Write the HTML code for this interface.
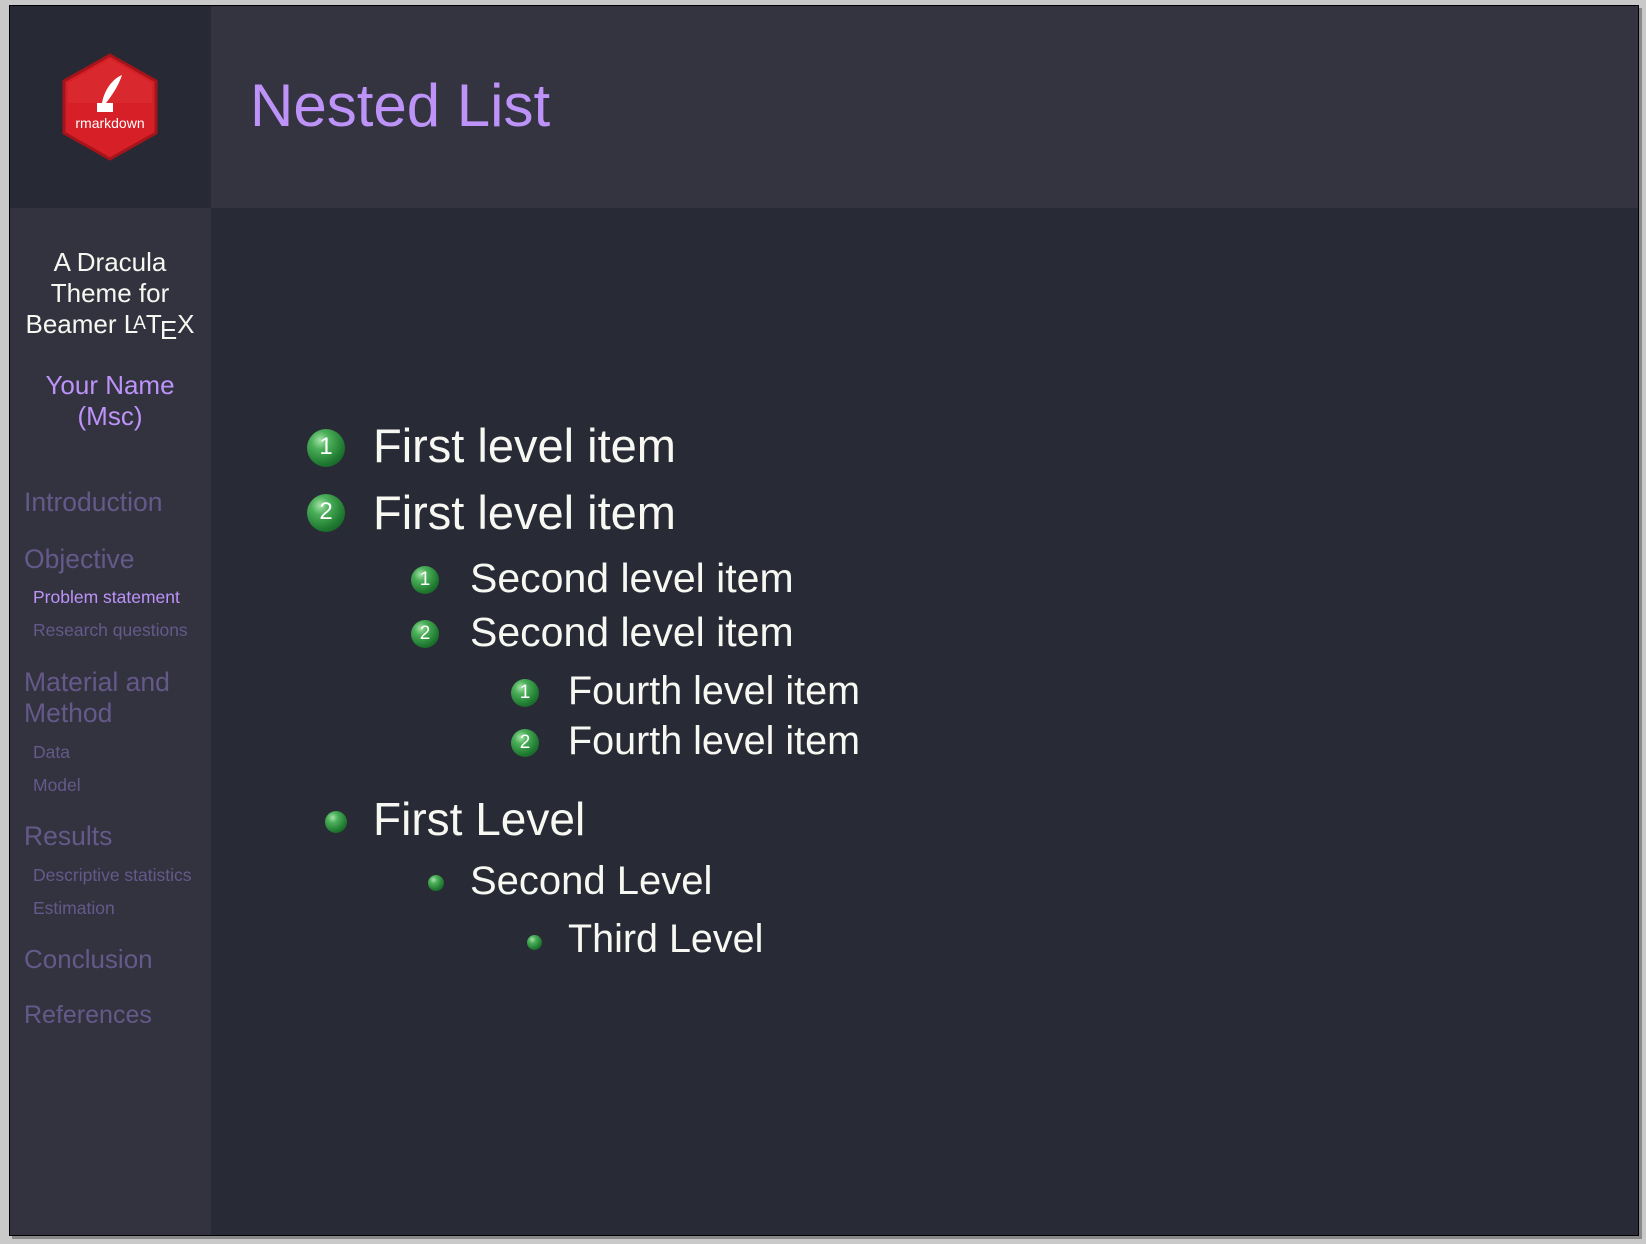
<!DOCTYPE html>
<html><head><meta charset="utf-8"><style>
html,body{margin:0;padding:0;}
body{width:1646px;height:1244px;background:#c9c9c9;position:relative;overflow:hidden;font-family:"Liberation Sans",sans-serif;}
#slide{position:absolute;left:9px;top:5px;width:1628px;height:1229px;background:#282a36;border:1px solid #000;box-shadow:3px 3px 0 #888;overflow:hidden;}
.a{position:absolute;line-height:1;white-space:nowrap;}
.ball{position:absolute;border-radius:50%;background:radial-gradient(circle at 35% 30%,#a6e3a8 0%,#4caf5a 25%,#1f7a30 65%,#0e4d1c 100%);color:#fff;text-align:center;}
</style></head><body>
<div id="slide">
  <div style="position:absolute;left:0;top:0;width:201px;height:202px;background:#272935"></div>
  <div style="position:absolute;left:201px;top:0;width:1427px;height:202px;background:#33343f"></div>
  <div style="position:absolute;left:0;top:202px;width:201px;height:1027px;background:#32333f"></div>
</div>
<svg style="position:absolute;left:60px;top:53px" width="100" height="110" viewBox="0 0 100 110">
  <polygon points="50,2 96,28 96,80 50,106 4,80 4,28" fill="#d71f27" stroke="#a3151b" stroke-width="3"/>
  <polygon points="50,6 92,30 92,50 8,50 8,30" fill="#e03a40" opacity="0.35"/>
  <path d="M62,22 C52,26 44,38 42,50 L46,50 C52,42 58,34 62,22 Z" fill="#fff"/>
  <rect x="37" y="50" width="16" height="9" fill="#fff"/>
  <text x="50" y="75" fill="#fff" font-size="14" text-anchor="middle" font-family="Liberation Sans,sans-serif">rmarkdown</text>
</svg>
<div class="a" style="left:250px;top:76px;font-size:60px;color:#bd93f9">Nested List</div>

<div style="position:absolute;left:9px;width:202px;top:0;text-align:center;color:#f8f8f2;font-size:26px;">
  <div class="a" style="left:0;width:202px;top:249px">A Dracula</div>
  <div class="a" style="left:0;width:202px;top:280px">Theme for</div>
  <div class="a" style="left:0;width:202px;top:311px">Beamer L<span style="font-size:19px;vertical-align:4px;margin-left:-5px">A</span>T<span style="vertical-align:-6px;margin-left:-2px">E</span>X</div>
  <div class="a" style="left:0;width:202px;top:372px;color:#bd93f9">Your Name</div>
  <div class="a" style="left:0;width:202px;top:403px;color:#bd93f9">(Msc)</div>
</div>
<div style="color:#65598a">
  <div class="a" style="left:24px;top:489px;font-size:26.5px">Introduction</div>
  <div class="a" style="left:24px;top:546px;font-size:26.5px">Objective</div>
  <div class="a" style="left:33px;top:589px;font-size:17.5px;color:#bd93f9">Problem statement</div>
  <div class="a" style="left:33px;top:622px;font-size:17.5px">Research questions</div>
  <div class="a" style="left:24px;top:669px;font-size:26.5px">Material and</div>
  <div class="a" style="left:24px;top:700px;font-size:26.5px">Method</div>
  <div class="a" style="left:33px;top:744px;font-size:17.5px">Data</div>
  <div class="a" style="left:33px;top:777px;font-size:17.5px">Model</div>
  <div class="a" style="left:24px;top:823px;font-size:26.5px">Results</div>
  <div class="a" style="left:33px;top:867px;font-size:17.5px">Descriptive statistics</div>
  <div class="a" style="left:33px;top:900px;font-size:17.5px">Estimation</div>
  <div class="a" style="left:24px;top:946px;font-size:26px">Conclusion</div>
  <div class="a" style="left:24px;top:1003px;font-size:25px">References</div>
</div>

<div style="color:#f8f8f2">
  <div class="ball" style="left:307px;top:429px;width:38px;height:38px;line-height:36px;font-size:24px">1</div>
  <div class="a" style="left:373px;top:422px;font-size:47px">First level item</div>
  <div class="ball" style="left:307px;top:494px;width:38px;height:38px;line-height:36px;font-size:24px">2</div>
  <div class="a" style="left:373px;top:489px;font-size:47px">First level item</div>

  <div class="ball" style="left:411px;top:566px;width:28px;height:28px;line-height:28px;font-size:19px">1</div>
  <div class="a" style="left:470px;top:558px;font-size:41px">Second level item</div>
  <div class="ball" style="left:411px;top:620px;width:28px;height:28px;line-height:28px;font-size:19px">2</div>
  <div class="a" style="left:470px;top:612px;font-size:41px">Second level item</div>

  <div class="ball" style="left:511px;top:679px;width:28px;height:28px;line-height:28px;font-size:19px">1</div>
  <div class="a" style="left:568px;top:672px;font-size:39.5px">Fourth level item</div>
  <div class="ball" style="left:511px;top:729px;width:28px;height:28px;line-height:28px;font-size:19px">2</div>
  <div class="a" style="left:568px;top:722px;font-size:39.5px">Fourth level item</div>

  <div class="ball" style="left:325px;top:811px;width:22px;height:22px"></div>
  <div class="a" style="left:373px;top:796px;font-size:46px">First Level</div>
  <div class="ball" style="left:428px;top:875px;width:16px;height:16px"></div>
  <div class="a" style="left:470px;top:861px;font-size:40px">Second Level</div>
  <div class="ball" style="left:527px;top:935px;width:15px;height:15px"></div>
  <div class="a" style="left:568px;top:920px;font-size:39.5px">Third Level</div>
</div>
</body></html>
